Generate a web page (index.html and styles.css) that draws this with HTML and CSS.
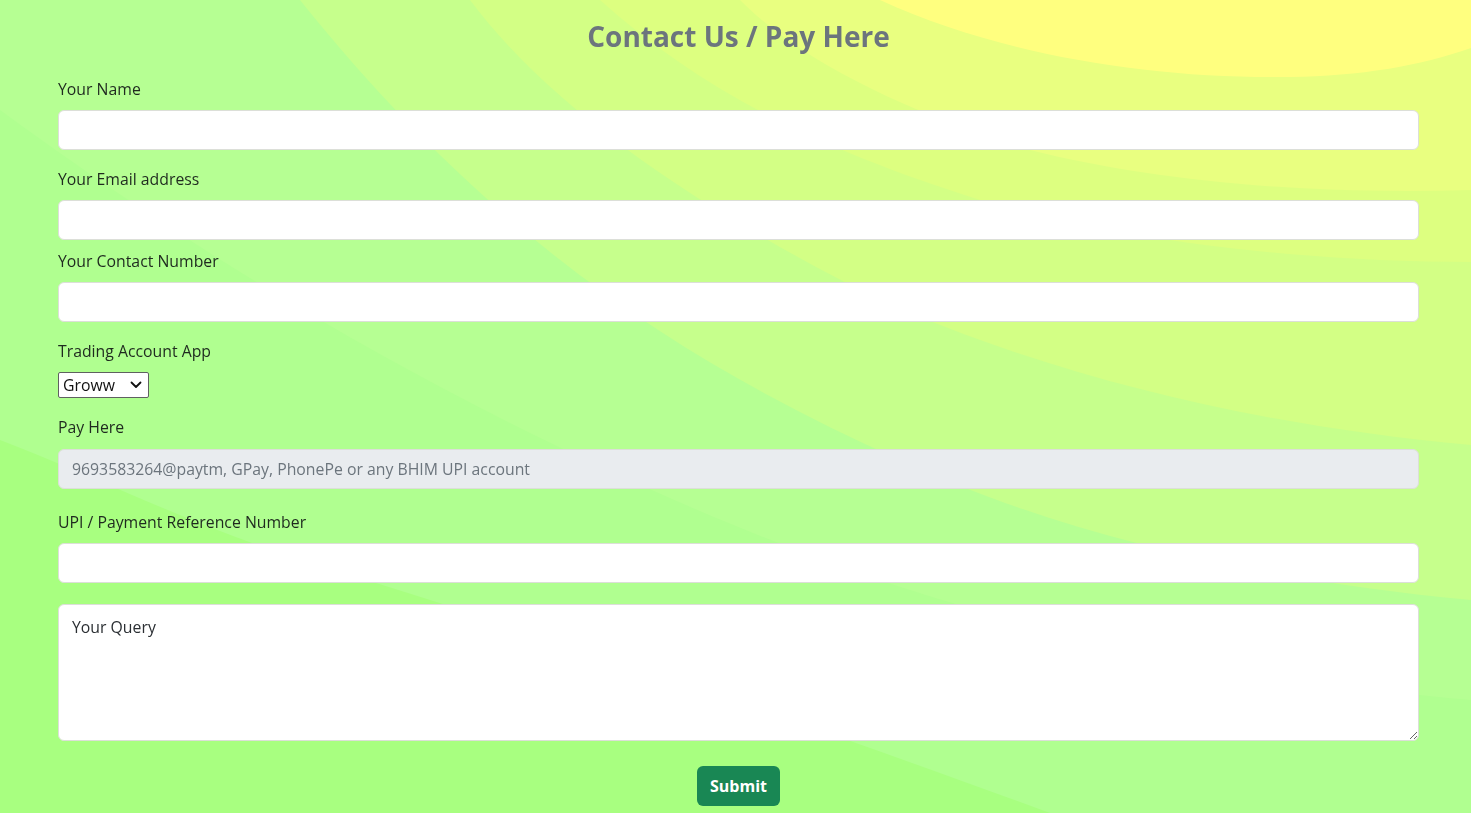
FILE: index.html
```html
<!DOCTYPE html>
<html lang="en">
<head>
<meta charset="utf-8">
<title>Contact Us / Pay Here</title>
<link rel="stylesheet" href="styles.css">
</head>
<body>
<svg class="bg" viewBox="0 0 1471 813" preserveAspectRatio="none" aria-hidden="true">
  <rect width="1471" height="813" fill="#a8ff80"/>
  <path fill="#b0ff90" d="M0 0 H1471 V813 H1050 C850 740 600 650 300 560 C180 520 80 470 0 440 Z"/>
  <path fill="#b6ff93" d="M0 0 H1471 V700 C1250 680 1050 640 850 570 C600 480 300 330 0 110 Z"/>
  <path fill="#c6ff8c" d="M120 0 H1471 V600 C1250 580 1050 530 900 460 C700 370 500 250 300 0 Z"/>
  <path fill="#d3ff85" d="M380 0 H1471 V445 C1250 425 1050 375 880 300 C720 220 560 120 470 0 Z"/>
  <path fill="#ddff80" d="M560 0 H1471 V262 C1300 262 1120 240 980 200 C820 150 700 90 600 0 Z"/>
  <path fill="#e9ff80" d="M720 0 H1471 V190 C1300 195 1150 180 1030 150 C900 110 800 60 740 0 Z"/>
  <path fill="#ffff7f" d="M880 0 H1471 V48 C1420 66 1360 76 1290 77 C1150 79 1000 55 880 0 Z"/>
</svg>
<main class="page">
  <h2 class="title">Contact Us / Pay Here</h2>
  <form class="form">
    <div class="group g-18">
      <label class="label" for="name">Your Name</label>
      <input class="control" id="name" type="text">
    </div>
    <div class="group g-10">
      <label class="label" for="email">Your Email address</label>
      <input class="control" id="email" type="email">
    </div>
    <div class="group g-18">
      <label class="label" for="phone">Your Contact Number</label>
      <input class="control" id="phone" type="tel">
    </div>
    <div class="group g-18">
      <label class="label" for="app">Trading Account App</label>
      <div class="select-wrap">
        <select class="select" id="app">
          <option>Groww</option>
          <option>Zerodha</option>
          <option>Upstox</option>
          <option>Angel One</option>
        </select>
        <svg class="chev" viewBox="0 0 12 8" aria-hidden="true"><path d="M1.5 1.5 L6 6 L10.5 1.5" fill="none" stroke="#111" stroke-width="1.8" stroke-linecap="round" stroke-linejoin="round"/></svg>
      </div>
    </div>
    <div class="group g-22">
      <label class="label lb-9" for="pay">Pay Here</label>
      <input class="control disabled" id="pay" type="text" placeholder="9693583264@paytm, GPay, PhonePe or any BHIM UPI account" disabled>
    </div>
    <div class="group g-21">
      <label class="label" for="ref">UPI / Payment Reference Number</label>
      <input class="control" id="ref" type="text">
    </div>
    <div class="group g-25">
      <textarea class="control area" placeholder="Your Query"></textarea>
    </div>
    <div class="actions">
      <button class="btn" type="submit">Submit</button>
    </div>
  </form>
</main>
</body>
</html>
```
FILE: styles.css
```css
html, body {
  margin: 0;
  padding: 0;
}
body {
  font-family: "Open Sans", "Noto Sans", sans-serif;
  font-size: 15.8px;
  color: #212529;
  min-height: 813px;
  overflow: hidden;
}
.bg {
  position: fixed;
  left: 0;
  top: 0;
  width: 100%;
  height: 100%;
  z-index: -1;
}
.page {
  padding: 0 52px 0 58px;
}
.title {
  margin: 18px 0 24px;
  text-align: center;
  font-size: 28px;
  line-height: 36px;
  font-weight: 700;
  color: #6c757d;
}
.form {
  display: flex;
  flex-direction: column;
}
.group {
  display: flex;
  flex-direction: column;
  align-items: stretch;
}
.g-10 { margin-bottom: 10px; }
.g-18 { margin-bottom: 18px; }
.g-21 { margin-bottom: 21px; }
.g-22 { margin-bottom: 22px; }
.g-25 { margin-bottom: 25px; }
.label {
  display: block;
  line-height: 23px;
  margin-bottom: 9px;
  color: #1f2a1f;
}
.lb-9 { margin-bottom: 10px; }
.control {
  box-sizing: border-box;
  width: 100%;
  height: 40px;
  padding: 6px 13px;
  font: inherit;
  line-height: 24px;
  color: #212529;
  background: #fff;
  border: 1px solid #dcdfd8;
  border-radius: 6px;
  outline: none;
}
.control::placeholder {
  color: #2b2f33;
}
.disabled {
  background: #e9ecef;
}
.disabled::placeholder {
  color: #6c757d;
}
.area {
  height: 137px;
  padding: 10px 13px;
  resize: vertical;
}
.select-wrap {
  position: relative;
  align-self: flex-start;
}
.select {
  appearance: none;
  -webkit-appearance: none;
  box-sizing: border-box;
  width: 91px;
  height: 26px;
  padding: 0 0 0 4px;
  font: inherit;
  color: #111;
  background: #fff;
  border: 1px solid #5f6160;
  border-radius: 2px;
  display: block;
}
.chev {
  position: absolute;
  right: 7px;
  top: 9px;
  width: 12px;
  height: 8px;
  pointer-events: none;
}
.actions {
  display: flex;
  justify-content: center;
}
.btn {
  height: 40px;
  padding: 0 13px;
  font: inherit;
  font-size: 16px;
  font-weight: 700;
  color: #fff;
  background: #198754;
  border: 0;
  border-radius: 6px;
}
```
